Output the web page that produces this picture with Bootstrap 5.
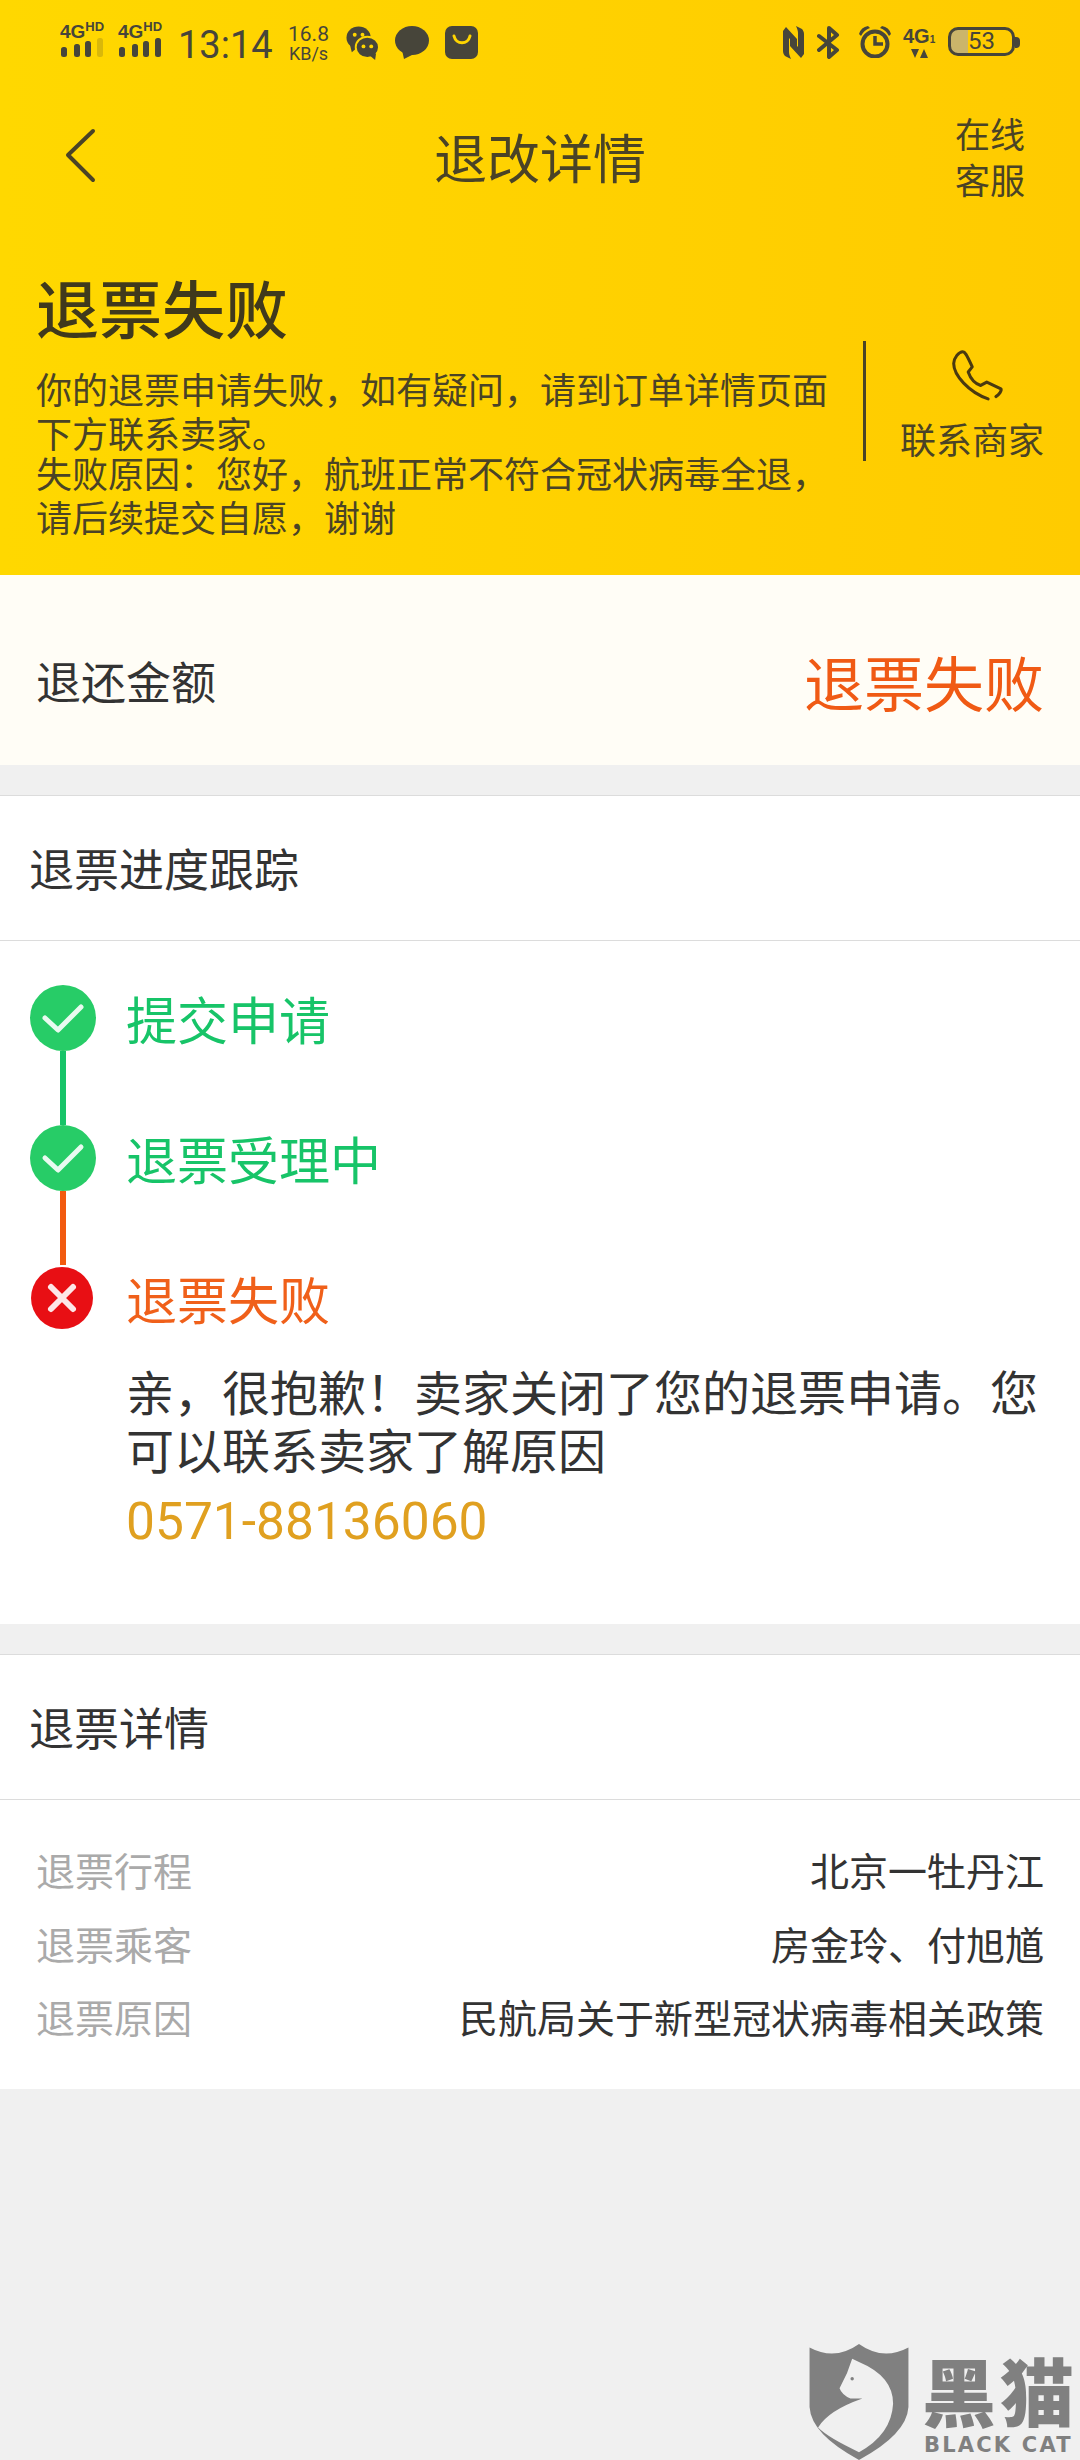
<!DOCTYPE html>
<html lang="zh-CN">
<head>
    <meta charset="UTF-8">
    <meta name="viewport" content="width=device-width, initial-scale=1.0">
    <title>退改详情</title>
    <link href="https://cdn.jsdelivr.net/npm/bootstrap@5.3.0/dist/css/bootstrap.min.css" rel="stylesheet">
    <style>
        html, body { background: #f0f0f0; }
        body { width: 1080px; height: 2460px; position: relative; overflow: hidden; font-family: "Noto Sans CJK SC", "Liberation Sans", sans-serif; color: #333; }
        .hdr { height: 575px; background: linear-gradient(90deg, #ffd800, #ffcb00); color: #4a4326; }
        .statusbar { height: 80px; padding: 26px 60px 0 60px; color: #47453a; font-family: Roboto, "Liberation Sans", sans-serif; }
        .sig { width: 45px; margin: -8px 13px 0 0; }
        .sig-last { margin-right: 15px; }
        .clock { font-size: 38px; line-height: 50px; margin: -6px 15px 0 0; width: 94px; white-space: nowrap; }
        .speed { width: 43px; margin: -2px 16px 0 0; text-align: center; white-space: nowrap; }
        .speed-num { display: block; font-size: 21px; line-height: 20px; }
        .speed-unit { display: block; font-size: 18px; line-height: 19px; }
        .tray-icon { margin-right: 16px; flex: none; }
        .nfc-gap { margin-right: 13px; }
        .bt-gap { margin-right: 18px; }
        .tray-wide { margin-right: 11px; }
        .bat-box { width: 67px; height: 29px; margin-top: 1px; border: 3px solid #47453a; border-radius: 10px; font-size: 24px; line-height: 23px; text-align: center; background: linear-gradient(90deg, #cbb56a 28%, transparent 28%); }
        .bat-tip { width: 5px; height: 11px; background: #47453a; border-radius: 0 4px 4px 0; margin-top: 11px; }
        .topbar { height: 118px; padding: 34px 55px 0 64px; }
        .page-title { font-size: 53px; line-height: 1; position: absolute; left: 0; right: 0; top: 130px; text-align: center; }
        .kefu { font-size: 35px; line-height: 46px; width: 70px; margin-left: auto; text-align: center; }
        .fail-box { padding: 68px 24px 0 36px; }
        .fail-title { font-size: 63px; line-height: 80px; font-weight: 500; color: #40391c; margin-bottom: 20px; }
        .fail-text { font-size: 36px; line-height: 44px; width: 800px; white-space: nowrap; color: #4a4326; }
        .fail-text p { margin: 0 0 -4px; }
        .contact { width: 193px; height: 120px; margin: 75px 0 0 auto; border-left: 3px solid #4a4326; text-align: center; padding: 9px 0 0 22px; }
        .contact-icon { margin-left: 14px; }
        .contact-label { font-size: 36px; line-height: 40px; white-space: nowrap; margin-top: 14px; }
        .refund { height: 190px; background: #fffdf6; padding: 22px 36px 0 36px; }
        .refund-label { font-size: 45px; }
        .refund-value { font-size: 60px; color: #f05a14; }
        .panel { background: #fff; border-top: 1px solid #dcdcdc; margin-top: 30px; }
        .panel-head { font-size: 45px; height: 145px; padding-left: 29px; border-bottom: 1px solid #dcdcdc; color: #333; }
        .tl { height: 683px; padding: 44px 0 0 30px; }
        .tl-rail { width: 66px; margin-right: 30px; }
        .dot { width: 66px; height: 66px; flex: none; }
        .bar { width: 6px; height: 74px; }
        .bar-ok { background: #17c468; }
        .bar-bad { background: #f25a0f; }
        .step-label { font-size: 51px; height: 66px; line-height: 66px; margin-bottom: 74px; white-space: nowrap; }
        .step-last { margin-bottom: 30px; }
        .ok-text { color: #17c468; }
        .bad-text { color: #f0601a; }
        .step-msg { font-size: 48px; line-height: 58px; width: 930px; color: #333; }
        .phone-no { font-size: 51.5px; line-height: 70px; color: #e0a020; font-family: Roboto, "Liberation Sans", sans-serif; margin-top: 10px; }
        .info { height: 289px; padding: 33px 36px 0 36px; font-size: 39px; line-height: 73.5px; }
        .info-key { color: #aaa; }
        .info-val { color: #333; }
        .watermark { position: absolute; left: 808px; top: 2343px; color: #808080; }
        .wm-cn { font-size: 74px; line-height: 72px; font-weight: 900; position: absolute; left: 114px; top: 10px; white-space: nowrap; letter-spacing: 4px; }
        .wm-en { font-family: "DejaVu Sans", sans-serif; font-size: 21px; line-height: 22px; font-weight: 700; position: absolute; left: 116px; top: 91px; white-space: nowrap; letter-spacing: 2.200px; }
    </style>
</head>
<body>
    <header class="hdr position-relative">
        <div class="statusbar d-flex align-items-start">
            <svg class="sig" height="42" viewBox="0 -4 45 42"><text x="0" y="16" font-size="19" font-weight="700" fill="#47453a" font-family="Liberation Sans">4G<tspan font-size="13" dy="-7">HD</tspan></text><g fill="#47453a"><rect x="1" y="25" width="6" height="10" rx="2.500"/><rect x="14" y="22" width="6" height="13" rx="2.500"/><rect x="25" y="19" width="6" height="16" rx="2.500"/><rect x="37" y="16" width="6" height="19" rx="2.500" fill="#d9b80a"/></g></svg>
            <svg class="sig sig-last" height="42" viewBox="0 -4 45 42"><text x="0" y="16" font-size="19" font-weight="700" fill="#47453a" font-family="Liberation Sans">4G<tspan font-size="13" dy="-7">HD</tspan></text><g fill="#47453a"><rect x="1" y="25" width="6" height="10" rx="2.500"/><rect x="14" y="22" width="6" height="13" rx="2.500"/><rect x="25" y="19" width="6" height="16" rx="2.500"/><rect x="37" y="16" width="6" height="19" rx="2.500"/></g></svg>
            <div class="clock">13:14</div>
            <div class="speed"><span class="speed-num">16.8</span><span class="speed-unit">KB/s</span></div>
            <svg width="33" height="34" viewBox="0 0 34 35" class="tray-icon"><ellipse cx="13" cy="12" rx="12.500" ry="11.500" fill="#47453a"/><path d="M4 19 L6 27 L12 22Z" fill="#47453a"/><circle cx="9" cy="9" r="2" fill="#ffd500"/><circle cx="17" cy="9" r="2" fill="#ffd500"/><ellipse cx="22" cy="22" rx="12" ry="11" fill="#47453a" stroke="#ffd500" stroke-width="2"/><path d="M25 31 L30 35 L31 28Z" fill="#47453a"/><circle cx="18" cy="21" r="2" fill="#ffd500"/><circle cx="26" cy="21" r="2" fill="#ffd500"/></svg>
            <svg width="34" height="33" viewBox="0 0 34 33" class="tray-icon"><ellipse cx="17" cy="14.500" rx="17" ry="14.500" fill="#47453a"/><path d="M7 24 L9 33 L19 28Z" fill="#47453a"/></svg>
            <svg width="33" height="33" viewBox="0 0 33 33"><rect width="33" height="33" rx="7" fill="#47453a"/><path d="M9 10 C11 19 23 19 25 10" stroke="#ffd500" stroke-width="3" fill="none" stroke-linecap="round"/></svg>
            <div class="d-flex align-items-start ms-auto">
                <svg width="21" height="33" viewBox="0 0 21 33" class="nfc-gap"><path d="M0 5 L3 1 L14 13 L14 21 L6 12 L6 26 C6 28 7 31 8 33 L2 30 C1 29 0 27 0 25Z" fill="#47453a"/><path d="M21 28 L18 32 L7 20 L7 12 L15 21 L15 7 C15 5 14 2 13 0 L19 3 C20 4 21 6 21 8Z" fill="#47453a"/></svg>
                <svg width="23" height="33" viewBox="0 0 23 33" class="bt-gap"><path d="M2 10 L20 24 L12 31 L12 2 L20 9 L2 24" fill="none" stroke="#47453a" stroke-width="4" stroke-linejoin="round" stroke-linecap="round"/></svg>
                <svg width="34" height="32" viewBox="0 0 34 32" class="tray-wide"><circle cx="17" cy="18" r="12.500" fill="none" stroke="#47453a" stroke-width="4"/><path d="M17 10 V18 H25" fill="none" stroke="#47453a" stroke-width="3.500"/><path d="M1 8 Q3 1 10 0 L12 2 Q6 4 3 10Z M33 8 Q31 1 24 0 L22 2 Q28 4 31 10Z" fill="#47453a"/></svg>
                <svg width="34" height="34" viewBox="0 0 34 34" class="tray-wide"><text x="0" y="17" font-size="20" font-weight="700" fill="#47453a" font-family="Liberation Sans">4G<tspan font-size="10">1</tspan></text><path d="M8 23 H16 L12 32Z M17 32 H25 L21 23Z" fill="#47453a"/></svg>
                <div class="bat-box">53</div>
                <div class="bat-tip"></div>
            </div>
        </div>
        <div class="topbar d-flex align-items-center">
            <svg width="32" height="56" viewBox="0 0 32 56"><path d="M29 3 L4 27 L29 52" fill="none" stroke="#4a4326" stroke-width="4" stroke-linecap="round" stroke-linejoin="round"/></svg>
            <div class="page-title">退改详情</div>
            <div class="kefu">在线<br>客服</div>
        </div>
        <div class="fail-box d-flex">
            <div>
                <div class="fail-title">退票失败</div>
                <div class="fail-text">
                    <p>你的退票申请失败，如有疑问，请到订单详情页面<br>下方联系卖家。</p>
                    <p>失败原因：您好，航班正常不符合冠状病毒全退，<br>请后续提交自愿，谢谢</p>
                </div>
            </div>
            <div class="contact flex-shrink-0">
                <svg class="contact-icon" width="54" height="54" viewBox="0 0 160 160"><path d="M107 145 C50 125 5 75 5 40 C5 25 20 5 32 5 C38 5 42 10 60 50 L48 65 C55 85 70 100 85 105 L103 95 L145 115 C148 120 140 132 130 138" fill="none" stroke="#4a3a10" stroke-width="9" stroke-linecap="round" stroke-linejoin="round"/></svg>
                <div class="contact-label">联系商家</div>
            </div>
        </div>
    </header>

    <section class="refund d-flex align-items-center justify-content-between">
        <div class="refund-label">退还金额</div>
        <div class="refund-value">退票失败</div>
    </section>

    <section class="panel">
        <div class="panel-head d-flex align-items-center">退票进度跟踪</div>
        <div class="tl d-flex">
            <div class="tl-rail d-flex flex-column align-items-center">
                <svg class="dot" viewBox="0 0 66 66"><circle cx="33" cy="33" r="33" fill="#27cc67"/><path d="M15 33 L28 45 L51 22" fill="none" stroke="#fff" stroke-width="5" stroke-linecap="round" stroke-linejoin="round" opacity=".9"/></svg>
                <div class="bar bar-ok"></div>
                <svg class="dot" viewBox="0 0 66 66"><circle cx="33" cy="33" r="33" fill="#27cc67"/><path d="M15 33 L28 45 L51 22" fill="none" stroke="#fff" stroke-width="5" stroke-linecap="round" stroke-linejoin="round" opacity=".9"/></svg>
                <div class="bar bar-bad"></div>
                <svg class="dot" viewBox="0 0 66 66"><circle cx="32" cy="33" r="31" fill="#e80f14"/><path d="M21 22 L43 44 M43 22 L21 44" fill="none" stroke="#fff" stroke-width="6" stroke-linecap="round" opacity=".9"/></svg>
            </div>
            <div class="flex-grow-1">
                <div class="step-label ok-text">提交申请</div>
                <div class="step-label ok-text">退票受理中</div>
                <div class="step-label step-last bad-text">退票失败</div>
                <div class="step-msg">亲，很抱歉！卖家关闭了您的退票申请。您可以联系卖家了解原因</div>
                <div class="phone-no">0571-88136060</div>
            </div>
        </div>
    </section>

    <section class="panel">
        <div class="panel-head d-flex align-items-center">退票详情</div>
        <div class="info">
            <div class="d-flex justify-content-between"><span class="info-key">退票行程</span><span class="info-val">北京一牡丹江</span></div>
            <div class="d-flex justify-content-between"><span class="info-key">退票乘客</span><span class="info-val">房金玲、付旭馗</span></div>
            <div class="d-flex justify-content-between"><span class="info-key">退票原因</span><span class="info-val">民航局关于新型冠状病毒相关政策</span></div>
        </div>
    </section>

    <div class="watermark">
        <svg width="102" height="118" viewBox="91 72 298 346"><path d="M95 85 Q170 125 240 75 Q310 125 385 85 L385 260 Q380 340 240 415 Q100 340 95 260Z" fill="#808080"/><path d="M220 118 L240 128 Q340 170 340 250 Q335 340 240 392 Q150 350 120 320 Q150 270 250 235 L215 235 Q190 225 183 205 L205 160Z" fill="#f0f0f0"/><circle cx="220" cy="177" r="5" fill="#808080"/></svg>
        <div class="wm-cn">黑猫</div>
        <div class="wm-en">BLACK CAT</div>
    </div>
</body>
</html>
